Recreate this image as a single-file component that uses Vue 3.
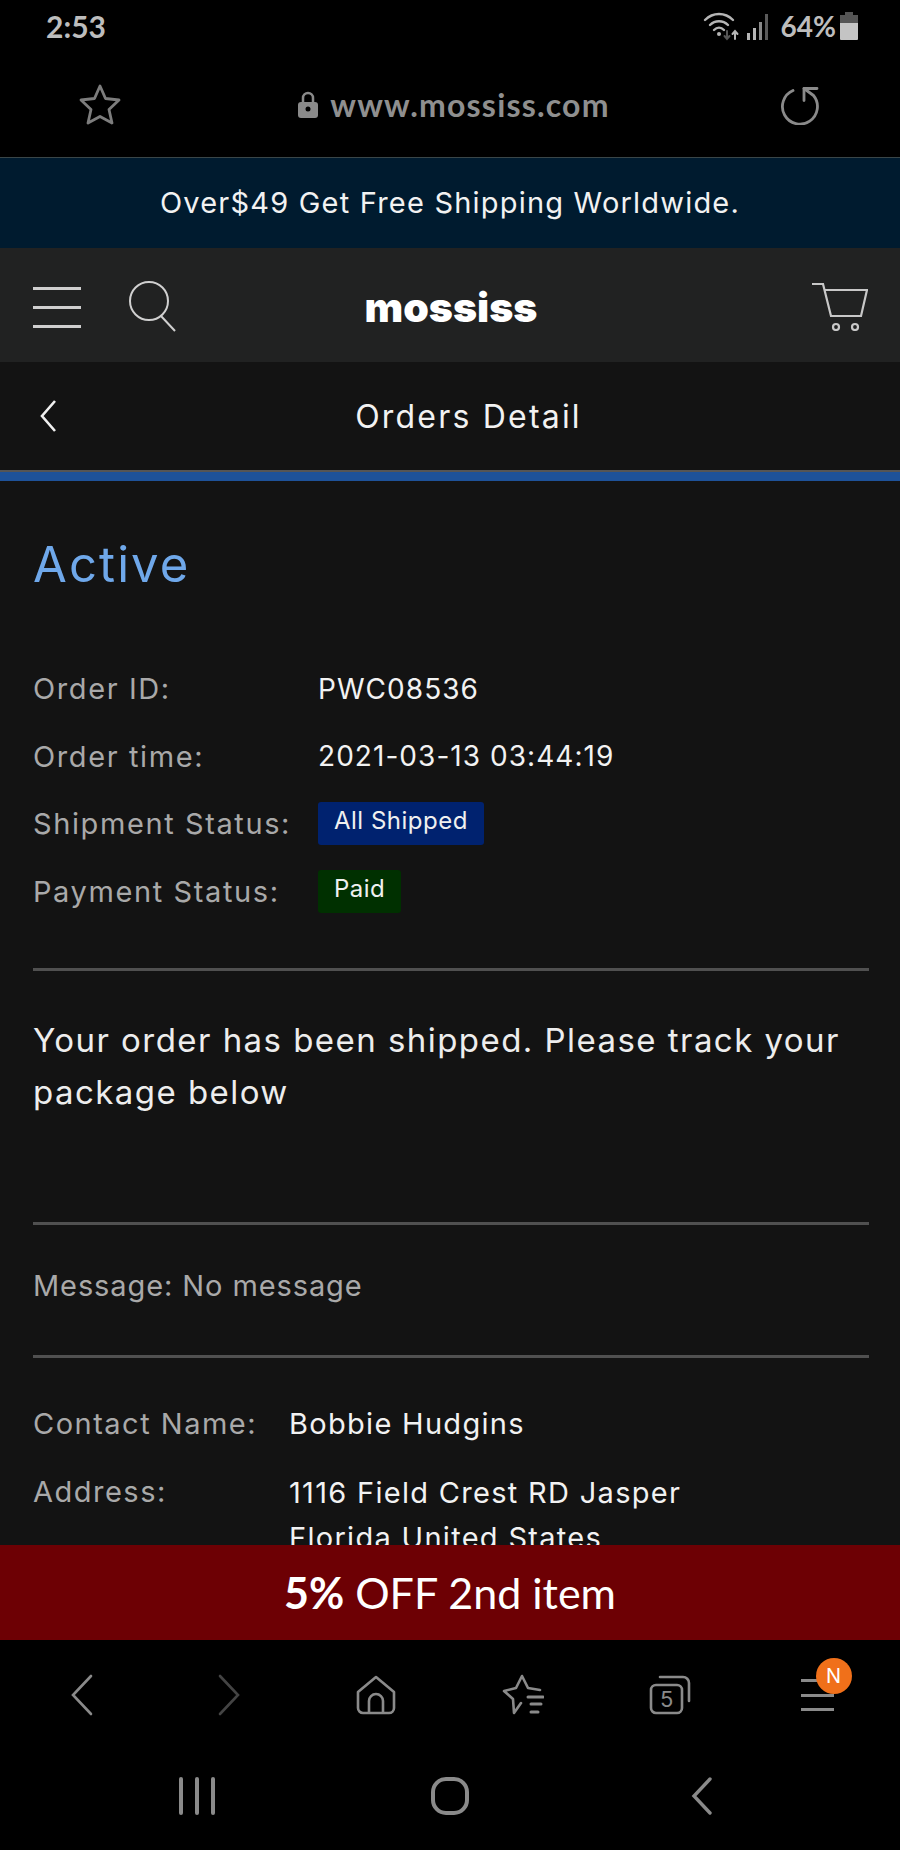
<script setup>
const orderRows = [
  { label: 'Order ID:', value: 'PWC08536' },
  { label: 'Order time:', value: '2021-03-13 03:44:19' },
  { label: 'Shipment Status:', badge: 'All Shipped', kind: 'blue' },
  { label: 'Payment Status:', badge: 'Paid', kind: 'green' }
]
</script>

<template>
  <div class="phone">
    <div class="status-bar">
      <span class="clock">2:53</span>
      <div class="status-right">
        <svg class="wifi" width="36" height="30" viewBox="0 0 36 30" fill="none" stroke="#b5b5b5" stroke-width="2.4" stroke-linecap="round">
          <path d="M2 9 C10 1 22 1 30 9" />
          <path d="M7 14 C12 9 20 9 25 14" />
          <path d="M11 19 C14 16 18 16 21 19" />
          <circle cx="16" cy="23" r="2" fill="#b5b5b5" stroke="none" />
          <path d="M24 20 V28 M21.5 25 L24 28 L26.5 25" stroke="#555" stroke-width="2" />
          <path d="M32 28 V20 M29.5 23 L32 20 L34.5 23" stroke-width="2" />
        </svg>
        <svg class="signal" width="24" height="27" viewBox="0 0 24 27">
          <rect x="0" y="20" width="3" height="7" fill="#b5b5b5" />
          <rect x="6" y="15" width="3" height="12" fill="#b5b5b5" />
          <rect x="12" y="9" width="3" height="18" fill="#8a8a8a" />
          <rect x="18" y="1" width="3" height="26" fill="#5a5a5a" />
        </svg>
        <span class="battery-text">64%</span>
        <svg width="18" height="28" viewBox="0 0 18 28">
          <rect x="5" y="0" width="8" height="4" fill="#555" />
          <rect x="0" y="3" width="18" height="25" rx="1" fill="#c4c4c4" />
          <rect x="0" y="3" width="18" height="8" fill="#555" />
        </svg>
      </div>
    </div>

    <div class="browser-bar">
      <svg width="44" height="44" viewBox="0 0 44 44" fill="none" stroke="#7d7d7d" stroke-width="2.8" stroke-linejoin="round">
        <path d="M22 3 L27.5 15.5 L41 17 L31 26.5 L34 40 L22 33.5 L10 40 L13 26.5 L3 17 L16.5 15.5 Z" />
      </svg>
      <div class="url">
        <svg width="20" height="28" viewBox="0 0 20 28">
          <path d="M5 12 V7 a5 5 0 0 1 10 0 V12" fill="none" stroke="#8a8a8a" stroke-width="2.5" />
          <rect x="0" y="11" width="20" height="16" rx="3" fill="#8a8a8a" />
          <circle cx="10" cy="18" r="2.5" fill="#000" />
        </svg>
        <span>www.mossiss.com</span>
      </div>
      <svg width="40" height="40" viewBox="0 0 40 40" fill="none" stroke="#8a8a8a" stroke-width="2.8" stroke-linecap="round" stroke-linejoin="round">
        <path d="M13 5.5 A17.5 17.5 0 1 0 33.5 10.5 L24 3.5" />
        <path d="M37 3.5 H24 V15.5" />
      </svg>
    </div>

    <div class="promo">Over$49 Get Free Shipping Worldwide.</div>

    <header class="site-header">
      <div class="header-left">
        <div class="burger"><i></i><i></i><i></i></div>
        <svg width="50" height="52" viewBox="0 0 50 52" fill="none" stroke="#d0d0d0" stroke-width="2">
          <circle cx="20" cy="20" r="19" />
          <path d="M32 35 L46 50" />
        </svg>
      </div>
      <div class="logo">mossiss</div>
      <svg class="cart" width="56" height="48" viewBox="0 0 56 48" fill="none" stroke="#c8c8c8" stroke-width="2.2">
        <path d="M0 1 H11 L19 33 H49 L55 7 H12" />
        <circle cx="24" cy="44" r="3" />
        <circle cx="43" cy="44" r="3" />
      </svg>
    </header>

    <div class="sub-header">
      <svg class="back" width="22" height="34" viewBox="0 0 22 34" fill="none" stroke="#f0f0f0" stroke-width="2.6">
        <path d="M17 2 L4 17 L17 32" />
      </svg>
      <h1>Orders Detail</h1>
    </div>
    <div class="progress-line"></div>

    <main class="content">
      <h2 class="state">Active</h2>
      <div class="info-list">
        <div v-for="row in orderRows" :key="row.label" class="info-row">
          <span class="label">{{ row.label }}</span>
          <span v-if="row.value" class="value">{{ row.value }}</span>
          <span v-else class="badge" :class="row.kind">{{ row.badge }}</span>
        </div>
      </div>
      <div class="divider first"></div>
      <p class="notice">Your order has been shipped. Please track your package below</p>
      <div class="divider second"></div>
      <p class="message">Message: No message</p>
      <div class="divider third"></div>
      <div class="contact-row">
        <span class="contact-label">Contact Name:</span>
        <span class="value">Bobbie Hudgins</span>
      </div>
      <div class="contact-row address">
        <span class="contact-label">Address:</span>
        <span class="value">1116 Field Crest RD Jasper<br />Florida United States</span>
      </div>
    </main>

    <div class="offer"><b>5%</b>&nbsp;OFF 2nd item</div>

    <nav class="browser-nav">
      <svg width="24" height="42" viewBox="0 0 24 42" fill="none" stroke="#8a8a8a" stroke-width="2.6" stroke-linecap="round">
        <path d="M21 2 L3 21 L21 40" />
      </svg>
      <svg width="24" height="42" viewBox="0 0 24 42" fill="none" stroke="#444" stroke-width="2.6" stroke-linecap="round">
        <path d="M3 2 L21 21 L3 40" />
      </svg>
      <svg width="40" height="40" viewBox="0 0 40 40" fill="none" stroke="#8a8a8a" stroke-width="2.6" stroke-linejoin="round">
        <path d="M2 17 L20 2 L38 17 V33 a5 5 0 0 1 -5 5 H7 a5 5 0 0 1 -5 -5 Z" />
        <path d="M13 38 V26 a7 7 0 0 1 14 0 V38" />
      </svg>
      <svg width="42" height="42" viewBox="0 0 42 42" fill="none" stroke="#8a8a8a" stroke-width="2.6" stroke-linejoin="round" stroke-linecap="round">
        <path d="M19 29 L12 39 L11 25 L2 17 L14 14 L20 2 L26 14 L38 16" />
        <path d="M26 23 H41 M29 30 H39 M29 38 H36" stroke-width="3" />
      </svg>
      <div class="tabs-icon">
        <svg width="42" height="40" viewBox="0 0 42 40" fill="none" stroke="#8a8a8a" stroke-width="2.6" stroke-linecap="round">
          <path d="M11 2 H34 a6 6 0 0 1 6 6 V26" />
          <rect x="2" y="10" width="31" height="28" rx="5" />
        </svg>
        <span>5</span>
      </div>
      <div class="menu-icon">
        <i></i><i></i><i></i>
        <span class="menu-badge">N</span>
      </div>
    </nav>

    <div class="system-nav">
      <svg width="36" height="38" viewBox="0 0 36 38" fill="#8a8a8a">
        <rect x="0" y="0" width="4" height="38" rx="2" />
        <rect x="16" y="0" width="4" height="38" rx="2" />
        <rect x="32" y="0" width="4" height="38" rx="2" />
      </svg>
      <svg width="38" height="38" viewBox="0 0 38 38" fill="none" stroke="#8a8a8a" stroke-width="4">
        <rect x="2" y="2" width="34" height="34" rx="13" />
      </svg>
      <svg width="22" height="38" viewBox="0 0 22 38" fill="none" stroke="#8a8a8a" stroke-width="3.4" stroke-linecap="round">
        <path d="M19 2 L3 19 L19 36" />
      </svg>
    </div>
  </div>
</template>

<style scoped>
.phone {
  width: 900px;
  height: 1850px;
  display: flex;
  flex-direction: column;
  overflow: hidden;
  background: #000;
  color: #fff;
  font-family: Inter, "Liberation Sans", sans-serif;
}

.status-bar {
  height: 52px;
  flex: none;
  display: flex;
  align-items: center;
  justify-content: space-between;
  padding: 0 42px 0 46px;
  font-family: Lato, sans-serif;
  font-weight: 700;
  color: #bdbdbd;
}

.clock {
  font-size: 30px;
}

.status-right {
  display: flex;
  align-items: center;
  gap: 6px;
}

.signal {
  margin-left: 2px;
}

.battery-text {
  font-size: 28px;
  margin: 0 -2px 0 4px;
}

.browser-bar {
  height: 105px;
  flex: none;
  display: flex;
  align-items: center;
  justify-content: space-between;
  padding: 0 80px 0 78px;
  border-bottom: 1px solid #3a4648;
}

.url {
  display: flex;
  align-items: center;
  gap: 12px;
  margin-left: 6px;
  font-family: Lato, sans-serif;
  font-size: 32px;
  font-weight: 700;
  color: #8f8f8f;
  letter-spacing: 1.2px;
}

.promo {
  height: 90px;
  flex: none;
  box-sizing: border-box;
  display: flex;
  align-items: center;
  justify-content: center;
  padding-bottom: 2px;
  background: #001b2f;
  font-size: 29px;
  letter-spacing: 1.2px;
  color: #f2f2f2;
}

.site-header {
  height: 114px;
  flex: none;
  box-sizing: border-box;
  display: flex;
  align-items: center;
  justify-content: space-between;
  padding: 4px 32px 0 33px;
  background: #212222;
  position: relative;
}

.header-left {
  display: flex;
  align-items: center;
  gap: 48px;
}

.burger {
  width: 48px;
  display: flex;
  flex-direction: column;
  gap: 16px;
}

.burger i {
  display: block;
  height: 3px;
  background: #cfcfcf;
}

.logo {
  position: absolute;
  left: 2px;
  right: 0;
  text-align: center;
  font-size: 41px;
  font-weight: 900;
  color: #fff;
}

.sub-header {
  height: 108px;
  flex: none;
  display: flex;
  align-items: center;
  justify-content: center;
  background: #131313;
  position: relative;
}

.back {
  position: absolute;
  left: 38px;
  top: 37px;
}

.sub-header h1 {
  margin: 0 0 0 37px;
  font-size: 32px;
  font-weight: 400;
  letter-spacing: 2.2px;
  color: #f2f2f2;
}

.progress-line {
  height: 9px;
  flex: none;
  background: #1e5299;
  border-top: 2px solid #555;
}

.content {
  flex: 1;
  min-height: 0;
  overflow: hidden;
  padding: 0 31px 0 33px;
  background: #131313;
}

.state {
  margin: 56px 0 0;
  font-size: 49px;
  line-height: 56px;
  font-weight: 400;
  color: #6fa8ea;
  letter-spacing: 2.1px;
}

.info-list {
  margin-top: 62px;
}

.info-row {
  height: 67.5px;
  display: flex;
  align-items: center;
}

.label {
  width: 285px;
  flex: none;
  font-size: 29px;
  color: #a9a9a9;
  letter-spacing: 1.6px;
}

.value {
  font-size: 28px;
  line-height: 52px;
  color: #f2f2f2;
  letter-spacing: 1.05px;
}

.badge {
  padding: 0 16px;
  height: 43px;
  line-height: 38px;
  box-sizing: border-box;
  border-radius: 3px;
  font-size: 24px;
  color: #f0f0f0;
  letter-spacing: 0.5px;
}

.badge.blue {
  background: #00226f;
}

.badge.green {
  background: #003000;
}

.divider {
  height: 3px;
  background: #505050;
}

.divider.first {
  margin-top: 43px;
}

.notice {
  margin: 43px 0 0;
  font-size: 33px;
  line-height: 52px;
  color: #ededed;
  letter-spacing: 1.45px;
}

.divider.second {
  margin-top: 104px;
}

.message {
  margin: 43px 0 0;
  font-size: 29px;
  line-height: 36px;
  color: #a9a9a9;
  letter-spacing: 0.9px;
}

.divider.third {
  margin-top: 51px;
}

.contact-row {
  display: flex;
  align-items: flex-start;
  margin-top: 40px;
}

.contact-row .value {
  font-size: 29px;
  letter-spacing: 1.3px;
}

.contact-row.address {
  margin-top: 16px;
}

.contact-row.address .value {
  line-height: 45px;
  padding-top: 3.5px;
}

.contact-label {
  width: 256px;
  flex: none;
  font-size: 29px;
  line-height: 52px;
  color: #a9a9a9;
  letter-spacing: 1.5px;
}

.offer {
  height: 95px;
  flex: none;
  display: flex;
  align-items: center;
  justify-content: center;
  background: #6d0004;
  font-family: Lato, sans-serif;
  font-size: 43px;
  color: #fff;
}

.browser-nav {
  height: 110px;
  flex: none;
  box-sizing: border-box;
  display: grid;
  grid-template-columns: repeat(6, 147px);
  align-items: center;
  justify-items: center;
  padding-left: 8.5px;
  background: #000;
}

.tabs-icon {
  position: relative;
  width: 42px;
  height: 40px;
}

.tabs-icon span {
  position: absolute;
  left: 11px;
  top: 10px;
  font-size: 22px;
  line-height: 28px;
  color: #8a8a8a;
}

.menu-icon {
  position: relative;
  width: 33px;
  display: flex;
  flex-direction: column;
  gap: 11.5px;
}

.menu-icon i {
  display: block;
  height: 3px;
  background: #8a8a8a;
}

.menu-badge {
  position: absolute;
  left: 15px;
  top: -21px;
  width: 36px;
  height: 36px;
  border-radius: 50%;
  background: #f0701a;
  color: #fff;
  font-size: 20px;
  line-height: 36px;
  text-align: center;
}

.system-nav {
  height: 100px;
  flex: none;
  box-sizing: border-box;
  display: grid;
  grid-template-columns: repeat(3, 252.5px);
  align-items: center;
  justify-items: center;
  padding: 0 0 8px 71px;
}
</style>

<style>
html,
body {
  background: #000;
}
</style>
